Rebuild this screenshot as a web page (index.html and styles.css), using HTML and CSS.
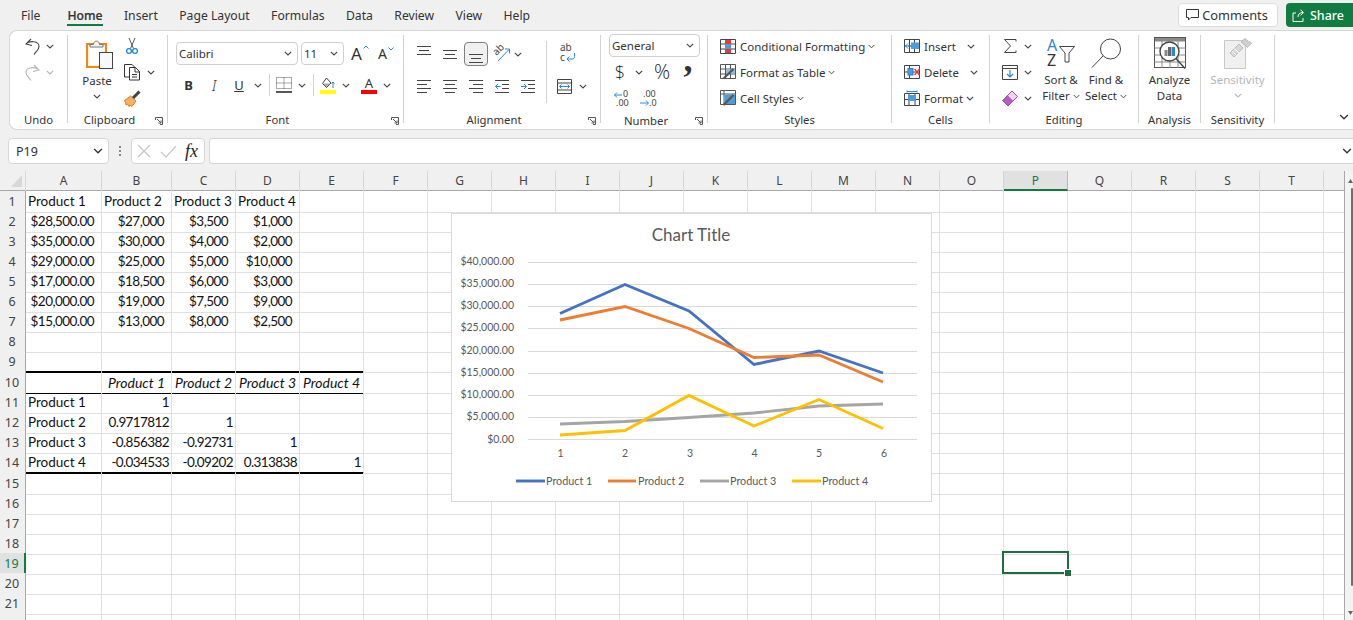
FILE: index.html
```html
<!DOCTYPE html>
<html lang="en">
<head>
<meta charset="utf-8">
<title>Excel</title>
<link rel="stylesheet" href="styles.css">
</head>
<body>
<svg class="sprite" aria-hidden="true">
  <symbol id="chev" viewBox="0 0 8 5"><path d="M.8.8 4 4 7.2.8" fill="none" stroke="currentColor" stroke-width="1.1"/></symbol>
  <symbol id="launch" viewBox="0 0 8 8"><path d="M.5 3V.5h7v7H5M2 2l4 4M6 3.500V6H3.500" fill="none" stroke="#555"/></symbol>
  <symbol id="undo" viewBox="0 0 15 17"><path d="M6 1 1 6l6 1.500M1 6C4 2.500 14 2.500 14 8.500c0 3-2.500 4.500-5 8" fill="none" stroke="currentColor" stroke-width="1.1"/></symbol>
  <symbol id="al" viewBox="0 0 14 14"><path d="M0 1.500h14M0 5.500h10M0 9.500h14M0 13.500h10" stroke="#444"/></symbol>
  <symbol id="ac" viewBox="0 0 14 14"><path d="M0 1.500h14M2 5.500h10M0 9.500h14M2 13.500h10" stroke="#444"/></symbol>
  <symbol id="ar" viewBox="0 0 14 14"><path d="M0 1.500h14M4 5.500h10M0 9.500h14M4 13.500h10" stroke="#444"/></symbol>
</svg>

<header class="tabbar">
  <nav class="tabs">
    <a class="tab">File</a><a class="tab active">Home</a><a class="tab">Insert</a><a class="tab">Page Layout</a><a class="tab">Formulas</a><a class="tab">Data</a><a class="tab">Review</a><a class="tab">View</a><a class="tab">Help</a>
  </nav>
  <button class="btn-comments">
    <svg width="13" height="12" viewBox="0 0 13 12"><path d="M.5.500h12v8H5L2.500 11V8.500h-2z" fill="none" stroke="#333"/></svg>Comments
  </button>
  <button class="btn-share">
    <svg width="14" height="13" viewBox="0 0 14 13"><path d="M4 4H1v8.500h10V9M6 8c0-3 2-4.500 5-4.500M8.500 .8 11.500 3.500 8.500 6.300" fill="none" stroke="#fff"/></svg>Share
  </button>
</header>

<section class="ribbon">
  <div class="grp g-undo">
    <div class="body stack">
      <div class="line"><svg class="i15"><use href="#undo"/></svg><svg class="chev"><use href="#chev"/></svg></div>
      <div class="line dim"><svg class="i15 flip"><use href="#undo"/></svg><svg class="chev"><use href="#chev"/></svg></div>
    </div>
    <div class="label">Undo</div>
  </div>

  <div class="grp g-clip has-launch">
    <div class="body clip-body">
      <div class="big paste">
        <svg class="paste-icon" width="30" height="31" viewBox="0 0 30 31"><rect x="2" y="6" width="19" height="23" fill="#fdf0d8" stroke="#e58a1f" stroke-width="2"/><rect x="4.500" y="8" width="14" height="19" fill="#fff"/><path d="M5 9V6.500h3.500c0-4.500 6-4.500 6 0H18V9z" fill="#f6f6f6" stroke="#777"/><rect x="14.500" y="14.500" width="13" height="16" fill="#f8f8f8" stroke="#444"/></svg>
        <span>Paste</span>
        <svg class="chev"><use href="#chev"/></svg>
      </div>
      <div class="stack">
        <div class="line"><svg width="16" height="18" viewBox="0 0 16 18"><path d="M5 1 9.500 11.500M11 1 6.500 11.500" stroke="#555" fill="none"/><circle cx="5" cy="14" r="2.400" fill="none" stroke="#1e88d8" stroke-width="1.300"/><circle cx="11" cy="14" r="2.400" fill="none" stroke="#1e88d8" stroke-width="1.300"/></svg></div>
        <div class="line"><svg width="17" height="18" viewBox="0 0 17 18"><path d="M5 14H.5V1.500H8L11 4.500M5.500 4.500h6l4 4v8.500h-10zM11 4.500V9h4.500M8 11.500h5M8 14h5" fill="none" stroke="#333"/></svg><svg class="chev c-copy"><use href="#chev"/></svg></div>
        <div class="line"><svg width="17" height="17" viewBox="0 0 17 17"><path d="M.5 10.500 6.500 6l5.500 5-4 5.500-2-1.500-1 1.500-1.500-2.500-1.500 1-.5-2.500z" fill="#f8b163" stroke="#e57f14"/><path d="M9 8 15.500 1.500" stroke="#444" stroke-width="3"/></svg></div>
      </div>
    </div>
    <div class="label">Clipboard</div>
    <svg class="launch"><use href="#launch"/></svg>
  </div>

  <div class="grp g-font has-launch">
    <div class="body">
      <div class="font-top">
        <div class="combo w-font"><span>Calibri</span><svg class="chev"><use href="#chev"/></svg></div>
        <div class="combo w-size"><span>11</span><svg class="chev"><use href="#chev"/></svg></div>
        <div class="grow-a a-big">A<svg width="6" height="4" viewBox="0 0 6 4"><path d="M.5 3.500 3 1l2.500 2.500" fill="none" stroke="#2b88d8"/></svg></div>
        <div class="grow-a a-small">A<svg width="6" height="4" viewBox="0 0 6 4"><path d="M.5.500 3 3 5.500.500" fill="none" stroke="#2b88d8"/></svg></div>
      </div>
      <div class="font-tools">
        <b class="f-b">B</b>
        <i class="f-i">I</i>
        <u class="f-u">U</u>
        <svg class="chev"><use href="#chev"/></svg>
        <span class="vsep"></span>
        <svg width="16" height="16" viewBox="0 0 16 16"><path d="M.5.500h15v11H.5zM8 .5v11M.5 6h15" fill="none" stroke="#555" stroke-dasharray="1 1"/><path d="M0 15h16" stroke="#111" stroke-width="1.400"/></svg>
        <svg class="chev"><use href="#chev"/></svg>
        <span class="vsep"></span>
        <span class="colored"><svg width="16" height="12" viewBox="0 0 16 12"><path d="M6.500 1 11 6 6.500 10.500 2.500 6.500z" fill="none" stroke="#444"/><path d="M3 6.500h7L6.500 10z" fill="#aaa"/><path d="M13 11V5l-1.500 1.500M13 5l1.500 1.500" fill="none" stroke="#2b88d8"/></svg><span class="bar yellow"></span></span>
        <svg class="chev"><use href="#chev"/></svg>
        <span></span>
        <span class="colored"><span class="a-letter">A</span><span class="bar red"></span></span>
        <svg class="chev"><use href="#chev"/></svg>
      </div>
    </div>
    <div class="label">Font</div>
    <svg class="launch"><use href="#launch"/></svg>
  </div>

  <div class="grp g-align has-launch">
    <div class="body align-body">
      <div class="align-grid">
        <svg class="a18" viewBox="0 0 14 18"><path d="M0 1.500h14M2 5.500h10M0 9.500h14" stroke="#444"/></svg>
        <svg class="a18" viewBox="0 0 14 18"><path d="M0 5.500h14M2 9.500h10M0 13.500h14" stroke="#444"/></svg>
        <span class="pressed"><svg class="a18" viewBox="0 0 14 18"><path d="M0 9.500h14M2 13.500h10M0 17.500h14" stroke="#444"/></svg></span>
        <svg width="17" height="17" viewBox="0 0 17 17"><text class="mini" transform="translate(2.500 10) rotate(-45)">ab</text><path d="M4 15 15 3.500M11 3h4.500v4.500" fill="none" stroke="#2b88d8"/></svg>
        <svg class="chev j-start"><use href="#chev"/></svg>
        <svg class="a14"><use href="#al"/></svg>
        <svg class="a14"><use href="#ac"/></svg>
        <svg class="a14"><use href="#ar"/></svg>
        <svg class="a14" viewBox="0 0 14 14"><path d="M0 1.500h14M7 5.500h7M7 9.500h7M0 13.500h14" stroke="#444"/><path d="M5.500 7.500H.5M3 5 .5 7.500 3 10" fill="none" stroke="#2b88d8"/></svg>
        <svg class="a14" viewBox="0 0 14 14"><path d="M0 1.500h14M7 5.500h7M7 9.500h7M0 13.500h14" stroke="#444"/><path d="M0 7.500h5M3 5l2.500 2.500L3 10" fill="none" stroke="#2b88d8"/></svg>
      </div>
      <span class="vsep tall"></span>
      <div class="wrap-col">
        <svg width="17" height="20" viewBox="0 0 17 20"><text class="mini" x="1" y="7">ab</text><text class="mini" x="1" y="17">c</text><path d="M15.500 9v3.500c0 2-1 2.500-2.500 2.500H8M10.500 12.500 8 15l2.500 2.500" fill="none" stroke="#2b88d8"/></svg>
        <div class="line merge"><svg width="15" height="15" viewBox="0 0 15 15"><path d="M.5.500h14v14H.5zM.5 4h14M.5 11h14" fill="none" stroke="#444"/><path d="M2.500 7.500h10M4.500 5.500l-2 2 2 2M10.500 5.500l2 2-2 2" fill="none" stroke="#2b88d8"/></svg><svg class="chev"><use href="#chev"/></svg></div>
      </div>
    </div>
    <div class="label">Alignment</div>
    <svg class="launch"><use href="#launch"/></svg>
  </div>

  <div class="grp g-num has-launch">
    <div class="body">
      <div class="combo w-num"><span>General</span><svg class="chev"><use href="#chev"/></svg></div>
      <div class="num-row">
        <span class="n-sym">$</span><svg class="chev"><use href="#chev"/></svg><span class="n-pct">%</span><span class="n-comma">,</span>
      </div>
      <div class="num-row2">
        <svg width="17" height="17" viewBox="0 0 17 17"><text class="mini-9" x="10" y="7">0</text><text class="mini-9" x="3" y="16">.00</text><path d="M9 5H1.500M4 2.500 1.500 5 4 7.500" fill="none" stroke="#2b88d8"/></svg>
        <svg width="17" height="17" viewBox="0 0 17 17"><text class="mini-9" x="4" y="7">.00</text><text class="mini-9" x="10" y="16">.0</text><path d="M1 13h8M7 10.500 9.500 13 7 15.500" fill="none" stroke="#2b88d8"/></svg>
      </div>
    </div>
    <div class="label">Number</div>
    <svg class="launch"><use href="#launch"/></svg>
  </div>

  <div class="grp g-styles">
    <div class="body stack">
      <div class="line"><svg width="16" height="15" viewBox="0 0 16 15"><path d="M.5.500h15v14H.5zM.5 5h15M.5 10h15M5.500.5v14M10.500.5v14" fill="none" stroke="#444"/><rect x="5" y="1" width="6" height="4" fill="#e8383b"/><rect x="5" y="5" width="6" height="5" fill="#4a9ee0"/><rect x="5" y="10" width="6" height="4" fill="#e8383b"/></svg><span class="t">Conditional Formatting</span><svg class="chev"><use href="#chev"/></svg></div>
      <div class="line"><svg width="16" height="16" viewBox="0 0 16 16"><path d="M.5.500h15v14H.5zM.5 5h15M.5 10h15M5.500.5v14M10.500.5v14" fill="none" stroke="#555"/><rect x="6" y="5.500" width="9" height="4" fill="#8cc0ec"/><path d="M3.500 14.500 13.500 5" stroke="#555" stroke-width="2.200"/></svg><span class="t">Format as Table</span><svg class="chev"><use href="#chev"/></svg></div>
      <div class="line"><svg width="16" height="16" viewBox="0 0 16 16"><path d="M.5.500h15v14H.5zM.5 4h15M4 .5v14" fill="none" stroke="#555"/><rect x="4.500" y="4.500" width="10.500" height="9.500" fill="#4a9ee0"/><path d="M3.500 15 13.500 5" stroke="#555" stroke-width="2.200"/></svg><span class="t">Cell Styles</span><svg class="chev"><use href="#chev"/></svg></div>
    </div>
    <div class="label">Styles</div>
  </div>

  <div class="grp g-cells">
    <div class="body stack">
      <div class="line"><svg width="16" height="14" viewBox="0 0 16 14"><path d="M.5.500h15v13H.5zM.5 7h15M5.500.5v13M10.500.5v13" fill="none" stroke="#444"/><rect x="7" y="3.500" width="8" height="6.500" fill="#4a9ee0"/><path d="M7 7H1.500M4 4.500 1.500 7 4 9.500" fill="#fff" stroke="#2b88d8"/></svg><span class="t">Insert</span><svg class="chev m-11"><use href="#chev"/></svg></div>
      <div class="line"><svg width="16" height="14" viewBox="0 0 16 14"><path d="M.5.500h15v13H.5zM.5 7h15M5.500.5v13" fill="none" stroke="#444"/><rect x="4" y="3.500" width="5" height="6.500" fill="#4a9ee0" stroke="#2b78c8"/><path d="m10.500 4 5 6M15.500 4l-5 6" stroke="#e8383b" stroke-width="1.300"/></svg><span class="t">Delete</span><svg class="chev m-11"><use href="#chev"/></svg></div>
      <div class="line"><svg width="16" height="16" viewBox="0 0 16 16"><path d="M.5 3.500h15v12H.5zM.5 9.500h15M5 3.500v12M11 3.500v12" fill="none" stroke="#444"/><rect x="4" y="5" width="8" height="6" fill="#4a9ee0"/><path d="M3 .5v2M13 .5v2M3 1.500h10" stroke="#2b88d8"/></svg><span class="t">Format</span><svg class="chev m-2"><use href="#chev"/></svg></div>
    </div>
    <div class="label">Cells</div>
  </div>

  <div class="grp g-edit">
    <div class="body edit-body">
      <div class="stack">
        <div class="line"><svg width="16" height="16" viewBox="0 0 16 16"><path d="M14 3.500V1.500H2.500L8.500 8l-6 6.500H14v-2" fill="none" stroke="#444"/></svg><svg class="chev m-6"><use href="#chev"/></svg></div>
        <div class="line"><svg width="16" height="15" viewBox="0 0 16 15"><path d="M.5.500h15v14H.5zM.5 3.500h15" fill="none" stroke="#444"/><path d="M8 5v7M5 9l3 3 3-3" fill="none" stroke="#2b88d8" stroke-width="1.200"/></svg><svg class="chev m-6"><use href="#chev"/></svg></div>
        <div class="line"><svg width="16" height="16" viewBox="0 0 16 16"><path d="M.5 10.500 10 1 15.500 6.500 6 16z" fill="#f0d4ee" stroke="#a64fb0"/><path d="M.5 10.500 5.300 5.700 10.800 11.200 6 16z" fill="#b45cc0" stroke="#a64fb0"/></svg><svg class="chev m-6"><use href="#chev"/></svg></div>
      </div>
      <div class="big sort">
        <svg class="big-i" width="30" height="30" viewBox="0 0 30 30"><text class="az az-a" x="1" y="13">A</text><text class="az" x="1" y="28">Z</text><path d="M13.500 8.500h15L23 15v9h-4v-9z" fill="none" stroke="#444"/></svg>
        <span>Sort &amp;</span>
        <span>Filter<svg class="chev tight"><use href="#chev"/></svg></span>
      </div>
      <div class="big find">
        <svg class="big-i" width="30" height="30" viewBox="0 0 30 30"><circle cx="19.500" cy="11" r="10" fill="none" stroke="#444"/><path d="M12 18 1 29.500" stroke="#444"/></svg>
        <span>Find &amp;</span>
        <span>Select<svg class="chev tight"><use href="#chev"/></svg></span>
      </div>
    </div>
    <div class="label">Editing</div>
  </div>

  <div class="grp g-ana">
    <div class="body">
      <div class="big">
        <svg class="big-i" width="32" height="32" viewBox="0 0 32 32"><rect x=".5" y=".5" width="31" height="30" fill="#fff" stroke="#555"/><rect x="1" y="1" width="30" height="3.500" fill="#8a8a8a"/><path d="M.5 11h31M.5 18h31M.5 25h31M8 4v27M16 22v9M24 4v27" stroke="#888" fill="none"/><circle cx="15.500" cy="14.500" r="9.500" fill="#fff" stroke="#444" stroke-width="1.400"/><rect x="10.500" y="13" width="3" height="6" fill="#888"/><rect x="14" y="10" width="3" height="9" fill="#666"/><rect x="17.500" y="10" width="3.500" height="9" fill="#2b88d8"/><path d="m22 21.500 9 10" stroke="#444" stroke-width="1.400"/></svg>
        <span>Analyze</span>
        <span>Data</span>
      </div>
    </div>
    <div class="label">Analysis</div>
  </div>

  <div class="grp g-sens">
    <div class="body">
      <div class="big disabled">
        <svg class="big-i" width="28" height="30" viewBox="0 0 28 30"><path d="M.5 2.500h21v28H.5z" fill="#f0f0f0" stroke="#c8c8c8"/><path d="m6 15 9-9 4 4-9 9z" fill="#d8d8d8" stroke="#bbb"/><path d="M8 13l5 5M10.500 10.500l5 5" stroke="#f5f5f5"/><path d="m17 4 4-3.500 3 2.500 3.500 2-4 4.500z" fill="#d0d0d0" stroke="#bbb"/></svg>
        <span>Sensitivity</span>
        <svg class="chev"><use href="#chev"/></svg>
      </div>
    </div>
    <div class="label">Sensitivity</div>
  </div>

  <svg class="collapse"><use href="#chev"/></svg>
</section>

<section class="fbar">
  <div class="namebox"><span>P19</span><svg class="chev-lg"><use href="#chev"/></svg></div>
  <span class="dots"></span>
  <div class="fxbox">
    <svg width="17" height="15" viewBox="0 0 17 15"><path d="m2 1 12 12M14 1 2 13" stroke="#c4c4c4" stroke-width="1.200"/></svg>
    <svg width="17" height="15" viewBox="0 0 17 15"><path d="m1 8 5 5L16 2" fill="none" stroke="#c4c4c4" stroke-width="1.200"/></svg>
    <span class="fx">fx</span>
  </div>
  <div class="finput"><svg class="chev-lg"><use href="#chev"/></svg></div>
</section>

<main class="workspace">
  <div class="sheet">
    <div class="row head">
      <div class="corner"><svg width="11" height="12" viewBox="0 0 11 12"><path d="M11 0v12H0z" fill="#d8d8d8"/></svg></div>
      <div class="ch">A</div><div class="ch">B</div><div class="ch">C</div><div class="ch">D</div><div class="ch">E</div>
      <div class="ch-rest">
        <div class="ch">F</div><div class="ch">G</div><div class="ch">H</div><div class="ch">I</div><div class="ch">J</div><div class="ch">K</div><div class="ch">L</div><div class="ch">M</div><div class="ch">N</div><div class="ch">O</div><div class="ch sel">P</div><div class="ch">Q</div><div class="ch">R</div><div class="ch">S</div><div class="ch">T</div>
      </div>
    </div>

    <div class="row"><div class="rh">1</div><div class="c">Product 1</div><div class="c">Product 2</div><div class="c">Product 3</div><div class="c">Product 4</div><div class="c"></div><div class="rest"></div></div>
    <div class="row"><div class="rh">2</div><div class="c cur">$28,500.00</div><div class="c cur">$27,000</div><div class="c cur">$3,500</div><div class="c cur">$1,000</div><div class="c"></div><div class="rest"></div></div>
    <div class="row"><div class="rh">3</div><div class="c cur">$35,000.00</div><div class="c cur">$30,000</div><div class="c cur">$4,000</div><div class="c cur">$2,000</div><div class="c"></div><div class="rest"></div></div>
    <div class="row"><div class="rh">4</div><div class="c cur">$29,000.00</div><div class="c cur">$25,000</div><div class="c cur">$5,000</div><div class="c cur">$10,000</div><div class="c"></div><div class="rest"></div></div>
    <div class="row"><div class="rh">5</div><div class="c cur">$17,000.00</div><div class="c cur">$18,500</div><div class="c cur">$6,000</div><div class="c cur">$3,000</div><div class="c"></div><div class="rest"></div></div>
    <div class="row"><div class="rh">6</div><div class="c cur">$20,000.00</div><div class="c cur">$19,000</div><div class="c cur">$7,500</div><div class="c cur">$9,000</div><div class="c"></div><div class="rest"></div></div>
    <div class="row"><div class="rh">7</div><div class="c cur">$15,000.00</div><div class="c cur">$13,000</div><div class="c cur">$8,000</div><div class="c cur">$2,500</div><div class="c"></div><div class="rest"></div></div>
    <div class="row"><div class="rh">8</div><div class="c"></div><div class="c"></div><div class="c"></div><div class="c"></div><div class="c"></div><div class="rest"></div></div>
    <div class="row r-thick"><div class="rh">9</div><div class="c tb"></div><div class="c tb"></div><div class="c tb"></div><div class="c tb"></div><div class="c tb"></div><div class="rest"></div></div>
    <div class="row"><div class="rh">10</div><div class="c hb"></div><div class="c hb it">Product 1</div><div class="c hb it">Product 2</div><div class="c hb it">Product 3</div><div class="c hb it">Product 4</div><div class="rest"></div></div>
    <div class="row"><div class="rh">11</div><div class="c">Product 1</div><div class="c num">1</div><div class="c"></div><div class="c"></div><div class="c"></div><div class="rest"></div></div>
    <div class="row"><div class="rh">12</div><div class="c">Product 2</div><div class="c num">0.9717812</div><div class="c num">1</div><div class="c"></div><div class="c"></div><div class="rest"></div></div>
    <div class="row"><div class="rh">13</div><div class="c">Product 3</div><div class="c num">-0.856382</div><div class="c num">-0.92731</div><div class="c num">1</div><div class="c"></div><div class="rest"></div></div>
    <div class="row r-thick"><div class="rh">14</div><div class="c tb">Product 4</div><div class="c tb num">-0.034533</div><div class="c tb num">-0.09202</div><div class="c tb num">0.313838</div><div class="c tb num">1</div><div class="rest"></div></div>
    <div class="row"><div class="rh">15</div><div class="c"></div><div class="c"></div><div class="c"></div><div class="c"></div><div class="c"></div><div class="rest"></div></div>
    <div class="row"><div class="rh">16</div><div class="c"></div><div class="c"></div><div class="c"></div><div class="c"></div><div class="c"></div><div class="rest"></div></div>
    <div class="row"><div class="rh">17</div><div class="c"></div><div class="c"></div><div class="c"></div><div class="c"></div><div class="c"></div><div class="rest"></div></div>
    <div class="row"><div class="rh">18</div><div class="c"></div><div class="c"></div><div class="c"></div><div class="c"></div><div class="c"></div><div class="rest"></div></div>
    <div class="row"><div class="rh rh-sel">19</div><div class="c"></div><div class="c"></div><div class="c"></div><div class="c"></div><div class="c"></div><div class="rest"></div></div>
    <div class="row"><div class="rh">20</div><div class="c"></div><div class="c"></div><div class="c"></div><div class="c"></div><div class="c"></div><div class="rest"></div></div>
    <div class="row"><div class="rh">21</div><div class="c"></div><div class="c"></div><div class="c"></div><div class="c"></div><div class="c"></div><div class="rest"></div></div>
    <div class="row"><div class="rh rh-blank"></div><div class="c"></div><div class="c"></div><div class="c"></div><div class="c"></div><div class="c"></div><div class="rest"></div></div>

    <figure class="chart">
      <svg width="479" height="287" viewBox="452 214 479 287">
        <text class="c-title" x="691" y="241">Chart Title</text>
        <g class="c-grid">
          <path d="M528 262.500h389M528 284.500h389M528 306.500h389M528 328.500h389M528 351.500h389M528 373.500h389M528 395.500h389M528 417.500h389M528 439.500h389"/>
        </g>
        <g class="c-ylab">
          <text x="514" y="265">$40,000.00</text><text x="514" y="287">$35,000.00</text><text x="514" y="309">$30,000.00</text><text x="514" y="331">$25,000.00</text><text x="514" y="354">$20,000.00</text><text x="514" y="376">$15,000.00</text><text x="514" y="398">$10,000.00</text><text x="514" y="420">$5,000.00</text><text x="514" y="443">$0.00</text>
        </g>
        <g class="c-xlab">
          <text x="560.500" y="457">1</text><text x="625" y="457">2</text><text x="690" y="457">3</text><text x="754.500" y="457">4</text><text x="819" y="457">5</text><text x="884" y="457">6</text>
        </g>
        <polyline class="s s1" points="560,313.500 625,284.500 689,311 754,364.500 819,351 883,373"/>
        <polyline class="s s2" points="560,320 625,306.500 689,328.500 754,357.500 819,355 883,382"/>
        <polyline class="s s3" points="560,424 625,421.500 689,417.500 754,413 819,406 883,404"/>
        <polyline class="s s4" points="560,435 625,430.500 689,395.500 754,426 819,399.500 883,428.500"/>
        <path class="s s1" d="M516 481h29"/><path class="s s2" d="M608 481h28"/><path class="s s3" d="M700 481h29"/><path class="s s4" d="M792 481h29"/>
        <g class="c-leg">
          <text x="546" y="485">Product 1</text><text x="638" y="485">Product 2</text><text x="730" y="485">Product 3</text><text x="822" y="485">Product 4</text>
        </g>
      </svg>
    </figure>

    <div class="selection"><span class="handle"></span></div>
  </div>
  <aside class="vscroll">
    <svg class="sb-arrow" width="5" height="4" viewBox="0 0 5 4"><path d="M2.500 0 5 4H0z" fill="#666"/></svg>
    <div class="thumb"></div>
    <svg class="sb-arrow" width="5" height="4" viewBox="0 0 5 4"><path d="M2.500 4 5 0H0z" fill="#666"/></svg>
  </aside>
</main>
</body>
</html>
```

FILE: styles.css
```css
* { box-sizing: border-box; }
html, body { margin: 0; height: 620px; overflow: hidden; }
body {
  background: #f0f0f0;
  font: 12px "Noto Sans", "Open Sans", sans-serif;
  color: #333;
  display: flex;
  flex-direction: column;
}
svg { display: block; flex: none; overflow: visible; }
.sprite { display: none; }

/* tab bar */
.tabbar { height: 30px; flex: none; display: flex; align-items: flex-start; }
.tabs { display: flex; margin-left: 21px; margin-right: auto; gap: 21.400px; }
.tab { font-size: 12.200px; line-height: 31px; height: 27px; color: #333; }
.tab:first-child { margin-right: 5.600px; }
.tab.active { font-weight: 500; border-bottom: 2px solid #107c41; height: 26px; -webkit-text-stroke: .2px #333; }
.btn-comments, .btn-share {
  font: inherit; font-size: 12.800px; height: 24px; margin-top: 3px; border-radius: 4px;
  display: flex; align-items: center; justify-content: center; gap: 3px; padding: 0;
}
.btn-comments { width: 100px; background: #fff; border: 1px solid #dcdcdc; color: #333; padding-right: 2px; }
.btn-share { width: 67px; margin-left: 8px; background: #107c41; border: 0; color: #fff; border-radius: 4px 0 0 4px; font-weight: 500; padding-right: 3px; font-size: 12.500px; gap: 4px; }

/* ribbon */
.ribbon {
  height: 100px; flex: none; margin-left: 9px; padding-top: 4px;
  background: #fff; border-radius: 8px 0 0 8px; border: 1px solid #d6d6d6; border-right: 0;
  display: flex; position: relative; font-size: 11.500px; color: #333;
}
.grp { height: 88px; border-right: 1px solid #d2d2d2; position: relative; flex: none; }
.body { height: 78px; margin-top: -2px; }
.label { height: 12px; line-height: 18px; text-align: center; font-size: 11.300px; color: #333; }
.has-launch .label { padding-right: 16px; }
.launch { width: 8px; height: 8px; position: absolute; right: 4px; bottom: -2px; }
.g-undo { width: 58px; }
.g-clip { width: 100px; }
.g-font { width: 236px; }
.g-align { width: 197px; }
.g-num { width: 107px; }
.g-styles { width: 184px; }
.g-cells { width: 98px; }
.g-edit { width: 149px; }
.g-ana { width: 62px; }
.g-sens { width: 74px; }
.collapse { width: 10px; height: 6px; position: absolute; left: 1329px; top: 83px; color: #333; }

.stack { display: flex; flex-direction: column; }
.line { height: 26px; display: flex; align-items: center; flex: none; }
.chev { width: 8px; height: 5px; color: #444; }
.i15 { width: 15px; height: 17px; color: #444; }
.flip { transform: scaleX(-1); }
.dim, .dim .chev, .dim .i15 { color: #b4b4b4; }

.g-undo .stack { padding-left: 15px; }
.g-undo .chev { margin-left: 6px; }

.clip-body { display: flex; padding-left: 10px; }
.big { display: flex; flex-direction: column; align-items: center; padding-top: 5px; line-height: 16px; }
.big-i { height: 30px; margin-bottom: 4px; }
.g-ana .big-i { height: 32px; margin-bottom: 3px; margin-top: -1px; }
.paste { width: 38px; margin-right: 8px; }
.paste-icon { margin-left: 5px; margin-bottom: 4px; }
.paste .chev { margin-top: 5px; }
.c-copy { margin-left: 6px; }

/* font group */
.font-top { display: flex; align-items: center; padding: 9px 0 0 8px; height: 32px; }
.combo {
  height: 23px; background: #fff; border: 1px solid #cfcfcf; border-radius: 4px; padding: 0 5px 0 2px;
  display: flex; align-items: center; justify-content: space-between; font-size: 11.500px;
}
.w-font { width: 122px; }
.w-size { width: 43px; margin-left: 3px; }
.w-num { width: 91px; margin: 1px 0 2px 8px; }
.grow-a { display: flex; align-items: flex-start; color: #333; }
.grow-a svg { margin-top: 3px; margin-left: 1px; }
.a-big { font-size: 17px; margin-left: 7px; width: 20px; }
.a-small { font-size: 14px; margin-left: 7px; }
.font-tools {
  display: grid; align-items: center; justify-items: center; height: 22px; margin: 9px 0 0 8px;
  grid-template-columns: 25px 26px 24px 14px 8px 21px 15px 8px 22px 14px 5px 22px 14px;
}
.f-b { font-size: 13px; font-weight: 700; }
.f-i { font-size: 14px; font-weight: 300; }
.f-u { font-size: 13px; }
.vsep { width: 1px; height: 22px; background: #d2d2d2; display: block; }
.colored { display: flex; flex-direction: column; align-items: center; width: 16px; }
.bar { width: 16px; height: 4px; display: block; }
.yellow { background: #ffff00; margin-top: 1px; }
.red { background: #ff0000; }
.a-letter { font-size: 13px; line-height: 13px; }

/* alignment */
.align-body { display: flex; padding: 5px 0 0 7px; }
.align-grid { display: grid; grid-template-columns: repeat(5, 26px); grid-auto-rows: 32px; align-items: center; justify-items: center; width: 130px; }
.a18 { width: 14px; height: 18px; }
.a14 { width: 14px; height: 14px; }
.pressed { width: 24px; height: 24px; background: #f0f0f0; border: 1px solid #7f7f7f; border-radius: 4px; display: flex; align-items: center; justify-content: center; }
.j-start { justify-self: start; margin-left: -1px; }
.tall { height: 62px; margin: 3px 0 0 5px; }
.wrap-col { display: flex; flex-direction: column; padding-left: 10px; }
.wrap-col > svg { height: 20px; margin-top: 6px; margin-left: 2px; }
.merge { margin-top: 9px; }
.merge .chev { margin-left: 7px; }
.mini { font-size: 10px; fill: #444; font-family: "Noto Sans", sans-serif; }
.mini-9 { font-size: 9px; fill: #444; font-family: "Noto Sans", sans-serif; }

/* number */
.num-row { display: grid; grid-template-columns: 22px 16px 30px 22px; margin-left: 8px; height: 26px; align-items: center; justify-items: center; }
.n-sym { font: 300 18px/26px "Open Sans", sans-serif; color: #222; }
.n-pct { font: 300 20px/26px "Open Sans", sans-serif; color: #222; }
.n-comma { font: 700 36px/0 "Liberation Serif", serif; color: #333; height: 26px; align-self: start; }
.num-row2 { display: flex; gap: 9px; margin-left: 12px; height: 26px; align-items: center; }

/* styles / cells */
.g-styles .stack, .g-cells .stack { padding-left: 12px; }
.t { margin-left: 4px; white-space: nowrap; }
.g-styles .chev { margin-left: 3px; width: 7px; }
.m-11 { margin-left: 11px; }
.m-2 { margin-left: 3px; }
.m-6 { margin-left: 6px; }

/* editing */
.edit-body { display: flex; padding-left: 12px; }
.sort { width: 48px; margin-left: 5px; }
.find { width: 44px; margin-left: -1px; }
.tight { display: inline-block; width: 7px; margin-left: 3px; vertical-align: 1px; }
.az { font-size: 16px; fill: #333; font-family: "Noto Sans", sans-serif; }
.az-a { fill: #2b88d8; }
.disabled, .disabled .chev { color: #b5b5b5; }
.disabled .chev { margin-top: 5px; }

/* formula bar */
.fbar { height: 41px; flex: none; padding: 8px 0 7px 8px; display: flex; }
.namebox, .fxbox, .finput { height: 26px; background: #fff; border: 1px solid #d6d6d6; border-radius: 4px; display: flex; align-items: center; }
.namebox { width: 101px; padding: 0 5px 0 7px; justify-content: space-between; font-size: 12.500px; color: #333; }
.chev-lg { width: 10px; height: 6px; color: #333; }
.dots { width: 2px; height: 10px; margin: 8px 9px 0 10px; background: repeating-linear-gradient(#888 0 2px, transparent 2px 4px); }
.fxbox { width: 74px; margin-left: 1px; padding-left: 4px; gap: 7px; }
.fx { font: italic 400 18px "Liberation Serif", serif; color: #222; margin-left: 1px; }
.finput { flex: 1; margin-left: 4px; justify-content: flex-end; border-radius: 4px 0 0 4px; border-right: 0; }
.finput .chev-lg { margin-right: 1px; }

/* sheet */
.workspace { flex: 1; display: flex; min-height: 0; overflow: hidden; }
.sheet { width: 1345px; flex: none; position: relative; background: #fff; border-right: 1px solid #a8a8a8; height: 449px; overflow: hidden; }
.row {
  display: grid; grid-template-columns: 26px 76px 70px 64px 64px 64px 1fr; height: 20px;
  font: 13.500px/21px Lato, "Noto Sans", sans-serif; color: #111;
}
.row.head { background: #f0f0f0; border-bottom: 1px solid #a8a8a8; font: 12px/19px "Noto Sans", sans-serif; height: 20px; }
.r-thick { height: 21px; }
.corner { border-right: 1px solid #d8d8d8; display: flex; justify-content: flex-end; padding: 4px 3px 0 0; }
.ch { border-right: 1px solid #d6d6d6; text-align: center; color: #444; }
.ch-rest { display: grid; grid-template-columns: repeat(15, 64px); }
.ch.sel { background: #e1e1e1; color: #107c41; border-bottom: 2px solid #107c41; height: 20px; border-right-color: #b8b8b8; }
.rh { background: #f0f0f0; border-right: 1px solid #a8a8a8; border-bottom: 1px solid #dcdcdc; color: #444; text-align: center; padding-right: 1px; font: 12.500px/21px "Noto Sans", sans-serif; }
.rh-sel { background: #e1e1e1; color: #107c41; border-right: 2px solid #107c41; }
.c { border-right: 1px solid #e0e0e0; border-bottom: 1px solid #e0e0e0; padding: 0 1px 0 2px; white-space: nowrap; overflow: hidden; }
.cur { text-align: right; padding-right: 7px; letter-spacing: -.55px; }
.num { text-align: right; padding-right: 2px; letter-spacing: -.6px; }
.it { font-style: italic; text-align: center; padding: 0; font-size: 14px; }
.tb { border-bottom: 2px solid #000; }
.hb { border-bottom: 1px solid #000; }
.rest {
  border-bottom: 1px solid #e0e0e0;
  background: repeating-linear-gradient(to right, transparent 0 63px, #e0e0e0 63px 64px);
}

/* chart */
.chart { position: absolute; left: 451px; top: 42px; width: 481px; height: 289px; margin: 0; background: #fff; border: 1px solid #d9d9d9; }
.chart text { font-family: Lato, "Noto Sans", sans-serif; fill: #595959; }
.c-title { font-size: 17px; text-anchor: middle; }
.c-grid path { stroke: #d9d9d9; fill: none; }
.c-ylab text { font-size: 10.500px; text-anchor: end; }
.c-xlab text { font-size: 10.500px; text-anchor: middle; }
.c-leg text { font-size: 10.800px; }
.s { fill: none; stroke-width: 2.900; }
.s1 { stroke: #4472c4; }
.s2 { stroke: #ed7d31; }
.s3 { stroke: #a5a5a5; }
.s4 { stroke: #ffc000; }

/* selection */
.selection { position: absolute; left: 1002px; top: 380px; width: 67px; height: 23px; border: 2px solid #1d6f42; }
.handle { position: absolute; right: -4px; bottom: -4px; width: 7px; height: 7px; background: #1d6f42; border: 1px solid #fff; border-width: 1px 0 0 1px; }

/* scrollbar */
.vscroll { flex: 1; background: #f3f3f3; display: flex; flex-direction: column; align-items: flex-end; padding-top: 8px; }
.sb-arrow { margin: 0 0 5px; }
.thumb { width: 2px; height: 399px; background: #707070; border-radius: 1px; margin-bottom: 25px; }
```
